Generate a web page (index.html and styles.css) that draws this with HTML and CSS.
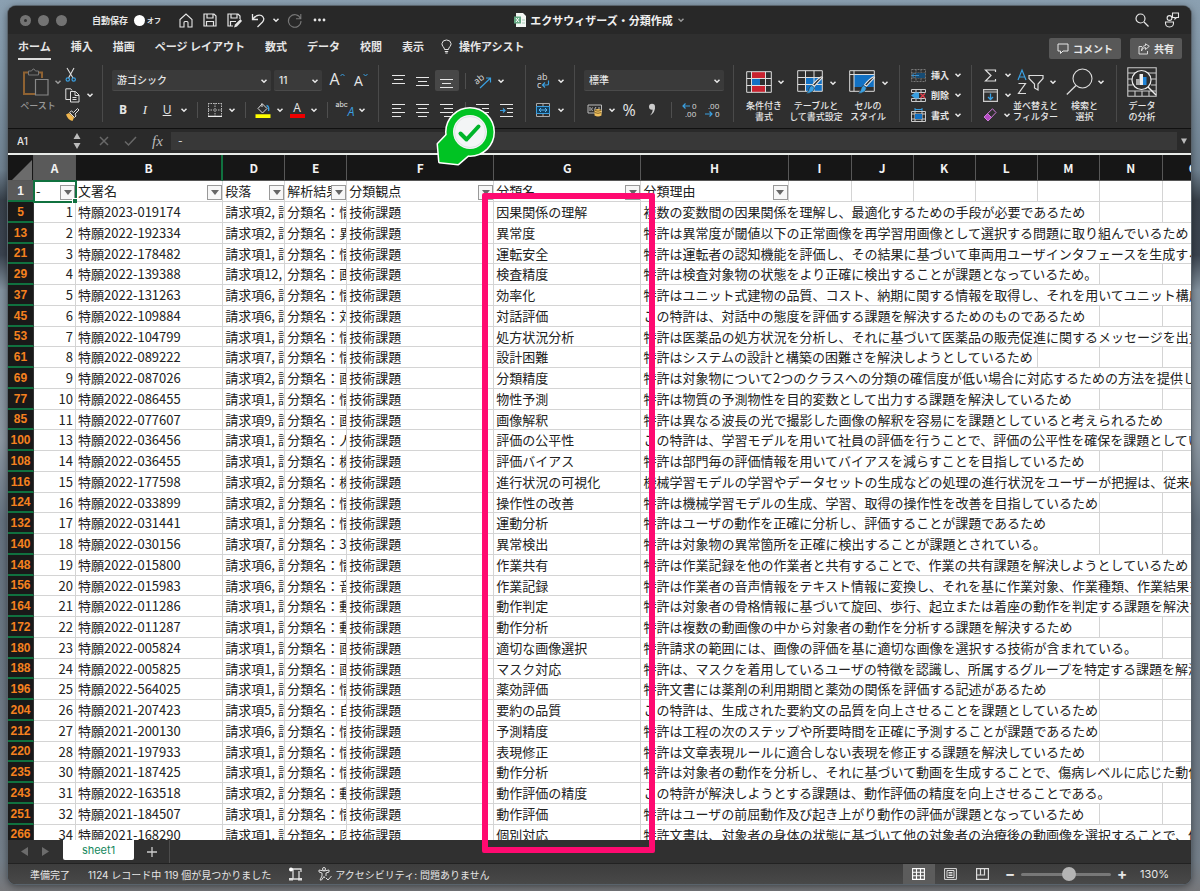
FILE: index.html
```html
<!DOCTYPE html>
<html lang="ja">
<head>
<meta charset="utf-8">
<title>エクサウィザーズ・分類作成</title>
<link rel="stylesheet" href="styles.css">
</head>
<body>
<svg class="defs" aria-hidden="true">
  <symbol id="chev" viewBox="0 0 8 8"><path d="M1.5 2.8 4 5.3 6.5 2.8" fill="none" stroke="currentColor" stroke-width="1.5"/></symbol>
  <symbol id="brush" viewBox="0 0 18 18"><path d="M16.500 1.500 9 9.500 7 8.500Q12 2.500 15.500.8Z" fill="#2f2f2f" stroke="#e8e8e8"/><path d="M6.500 9 9 11.300Q8 16.500 1 16.500 4 14 4 11.500 4.500 9.500 6.500 9Z" fill="#3a9fe0" stroke="#2f2f2f" stroke-width=".6"/></symbol>
</svg>
<div class="window">
  <header class="titlebar">
    <div class="title-left">
      <span class="lights"><i class="dot"></i><i></i><i></i></span>
      <label class="autosave">自動保存 <input type="checkbox" role="switch"><span class="switch">オフ</span></label>
      <button class="tb home" aria-label="ホーム画面"><svg width="14" height="15" viewBox="0 0 14 15"><path d="M1 6.500 7 1l6 5.500V14H9V9.500q0-1-1-1H6q-1 0-1 1V14H1Z" fill="none" stroke="currentColor" stroke-width="1.100"/></svg></button>
      <button class="tb" aria-label="保存"><svg width="14" height="14" viewBox="0 0 14 14"><path d="M1 1h10l2 2v10H1ZM4 1v4h6V1M3.500 13V8.500h7V13" fill="none" stroke="currentColor" stroke-width="1.200"/></svg></button>
      <button class="tb" aria-label="名前を付けて保存"><svg width="15" height="15" viewBox="0 0 15 15"><path d="M6 13H1V1h10l2 2v3M4 1v4h6V1M3.500 13V8.500H9" fill="none" stroke="currentColor" stroke-width="1.200"/><path d="M13.500 6 8 11.500 7 14.500 10 13.500 15 8" fill="currentColor"/></svg></button>
      <button class="tb" aria-label="元に戻す"><svg width="14" height="15" viewBox="0 0 14 15"><path d="M1.500 1v5.500H7M2 6Q6 .8 10.500 2.500 14.500 5.500 11.500 9L6.500 14" fill="none" stroke="currentColor" stroke-width="1.300"/></svg></button>
      <button class="tb narrow" aria-label="元に戻す履歴"><svg width="8" height="8"><use href="#chev"/></svg></button>
      <button class="tb dim" aria-label="やり直し"><svg width="15" height="15" viewBox="0 0 15 15"><path d="M13.500 5.500A6.300 6.300 0 1 0 14 8M13.800 1v4.800H9" fill="none" stroke="currentColor" stroke-width="1.100"/></svg></button>
      <button class="tb more" aria-label="その他"><svg width="13" height="4"><circle cx="2" cy="2" r="1.400" fill="currentColor"/><circle cx="6.500" cy="2" r="1.400" fill="currentColor"/><circle cx="11" cy="2" r="1.400" fill="currentColor"/></svg></button>
    </div>
    <h1 class="doc"><svg width="12" height="14" viewBox="0 0 12 14"><path d="M2 0h7l3 3v11H2Z" fill="#f2f6f3"/><path d="M0 3.500h7v7H0Z" fill="#63a882"/><path d="m2 5 3 4M5 5 2 9" stroke="#fff"/><path d="M8 7h3M8 10h3" stroke="#a8cdb8"/></svg>エクサウィザーズ・分類作成<svg class="soft" width="8" height="8"><use href="#chev"/></svg></h1>
    <div class="title-right">
      <button aria-label="検索"><svg width="14" height="14" viewBox="0 0 14 14"><circle cx="5.500" cy="5.500" r="4.500" fill="none" stroke="currentColor" stroke-width="1.200"/><path d="m9 9 4.500 4.500" stroke="currentColor" stroke-width="1.200"/></svg></button>
      <button aria-label="共同作業者"><svg width="16" height="16" viewBox="0 0 16 16"><g fill="none" stroke="currentColor" stroke-width="1.100"><path d="M8.500 1h6v4.500h-2L11 7V5.500H8.500ZM1.500 10h8q.5 5-4 5t-4-5Z"/><circle cx="5.500" cy="6" r="2.400"/></g></svg></button>
    </div>
  </header>

  <nav class="tabs">
    <div class="tab-list">
      <button class="active">ホーム</button><button>挿入</button><button>描画</button><button>ページ レイアウト</button><button>数式</button><button>データ</button><button>校閲</button><button>表示</button>
      <button class="assist"><svg width="11" height="15" viewBox="0 0 11 15"><path d="M3.500 10.500Q3.500 9 2 7.500.8 6 1 4.500 1.500 1 5.500 1T10 4.500Q10.200 6 9 7.500 7.500 9 7.500 10.500ZM3.800 12.500h3.400M4.300 14h2.400" fill="none" stroke="currentColor"/></svg>操作アシスト</button>
    </div>
    <div class="actions">
      <button><svg width="12" height="12" viewBox="0 0 12 12"><path d="M1 1h10v7H6L3.500 10.500V8H1Z" fill="none" stroke="currentColor"/></svg>コメント</button>
      <button><svg width="12" height="12" viewBox="0 0 12 12"><path d="M4 3.500H1V11h8.500V8M3.500 8Q4 4.500 7.500 4.500V6.500L11.300 3.300 7.500.8V2.500Q3.500 3 3.500 8Z" fill="none" stroke="currentColor" stroke-width=".9"/></svg>共有</button>
    </div>
  </nav>

  <div class="ribbon">
    <section class="group paste">
      <button class="big dimmed"><span class="pic"><svg width="26" height="28" viewBox="0 0 26 28"><path d="M5 4.500H1V26h12M16 4.500h3V10" fill="none" stroke="#8f6232" stroke-width="2"/><path d="M5.500 3h3l1.500-2h1l1.500 2h3v4h-10Z" fill="#2f2f2f" stroke="#777"/><path d="M12.500 11.500H25V27H12.500Z" fill="#2f2f2f" stroke="#888" stroke-width="1.200"/></svg><svg class="c" width="8" height="8"><use href="#chev"/></svg></span>ペースト</button>
      <div class="stack">
        <button aria-label="切り取り"><svg width="12" height="14" viewBox="0 0 12 14"><path d="M2 0 8 10M9 0 3.500 10" stroke="#ddd" stroke-width="1.100"/><g fill="none" stroke="#3a9fe0" stroke-width="1.200"><circle cx="2.800" cy="11.500" r="1.700"/><circle cx="8.700" cy="11.500" r="1.700"/></g></svg></button>
        <button aria-label="コピー"><svg width="15" height="15" viewBox="0 0 15 15"><path d="M5 11.500H.8V.8h5L7 2.500M5.500 3.500h5l3.500 3.500v7H5.500ZM10 3.500V7.500h4M7.500 9.500h4M7.500 11.500h4" fill="none" stroke="#ddd"/></svg><svg class="c" width="8" height="8"><use href="#chev"/></svg></button>
        <button aria-label="書式のコピー"><svg width="15" height="14" viewBox="0 0 15 14"><path d="M1 6.500 4 5l5 4.500L7.500 13Q3 12 1 6.500Z" fill="#f0b64e"/><path d="m4.500 4.500 2-1.500 2 1.500 4-4L14 2l-4 4 1 2-1.500 1.500Z" fill="#2f2f2f" stroke="#ddd"/></svg></button>
      </div>
    </section>

    <section class="group fonts">
      <div class="line">
        <span class="drop font"><select aria-label="フォント"><option>游ゴシック</option></select><svg width="8" height="8"><use href="#chev"/></svg></span>
        <span class="drop size"><select aria-label="フォント サイズ"><option>11</option></select><svg width="8" height="8"><use href="#chev"/></svg></span>
        <button class="w24 grow" aria-label="フォントの拡大"><span class="latin">A</span><svg width="5" height="4"><path d="M.5 3 2.500 1l2 2" fill="none" stroke="#3a9fe0"/></svg></button>
        <button class="w24 shrink" aria-label="フォントの縮小"><span class="latin">A</span><svg width="5" height="4"><path d="M.5 1l2 2 2-2" fill="none" stroke="#3a9fe0"/></svg></button>
      </div>
      <div class="line">
        <button class="w22 b">B</button><button class="w22 i">I</button><button class="w22 u">U</button><button class="w12" aria-label="下線の種類"><svg width="8" height="8"><use href="#chev"/></svg></button><i class="bar"></i>
        <button class="w22" aria-label="罫線"><svg width="14" height="14" viewBox="0 0 14 14"><path d="M.5 0v13M7 0v13M13.500 0v13M0 .5h14M0 7h14" stroke="#bbb" stroke-dasharray="1.500 1"/><path d="M0 13.300h14" stroke="#eee" stroke-width="1.300"/></svg></button><button class="w12" aria-label="罫線の種類"><svg width="8" height="8"><use href="#chev"/></svg></button><i class="bar"></i>
        <button class="w22" aria-label="塗りつぶし"><svg width="16" height="16" viewBox="0 0 16 16"><path d="M7 2 3 6.500 7.500 11 12 6.500 7 1.500V5" fill="none" stroke="#ddd"/><path d="M11.500 3.500Q14.500 4.500 13.500 9" fill="none" stroke="#3a9fe0" stroke-width="1.400"/><path d="M.5 12.300h15V16H.5Z" fill="#ffff00"/></svg></button><button class="w12" aria-label="塗りつぶしの色"><svg width="8" height="8"><use href="#chev"/></svg></button>
        <button class="w22 fcolor" aria-label="フォントの色"><span class="latin">A</span></button><button class="w12" aria-label="フォントの色の種類"><svg width="8" height="8"><use href="#chev"/></svg></button><i class="bar"></i>
        <button class="w22 phon" aria-label="文字装飾"><span>abc</span><em>A</em></button><button class="w12" aria-label="文字装飾の種類"><svg width="8" height="8"><use href="#chev"/></svg></button>
      </div>
    </section>

    <section class="group align">
      <div class="line">
        <button class="w24" aria-label="上揃え"><svg width="14" height="14"><path d="M0 1.500h13M2 5.500h9M0 9.500h13" stroke="currentColor"/></svg></button><button class="w24" aria-label="上下中央揃え"><svg width="14" height="14"><path d="M0 3.500h13M2 7.500h9M0 11.500h13" stroke="currentColor"/></svg></button><button class="w24 on" aria-label="下揃え"><svg width="14" height="14"><path d="M0 5.500h13M2 9.500h9M0 13.500h13" stroke="currentColor"/></svg></button><i class="bar thin"></i>
        <button class="w24" aria-label="方向"><svg width="17" height="16" viewBox="0 0 17 16"><text x="0" y="9" class="orient" transform="rotate(-40 5 8)">ab</text><path d="M5 15 15 5.500M11 5h4.500v4.500" fill="none" stroke="#3a9fe0" stroke-width="1.200"/></svg></button><button class="w12" aria-label="方向の種類"><svg width="8" height="8"><use href="#chev"/></svg></button>
      </div>
      <div class="line">
        <button class="w24" aria-label="左揃え"><svg width="14" height="14"><path d="M0 1.500h13M0 5.500h9M0 9.500h13M0 13.500h9" stroke="currentColor"/></svg></button><button class="w24" aria-label="中央揃え"><svg width="14" height="14"><path d="M0 1.500h13M2 5.500h9M0 9.500h13M2 13.500h9" stroke="currentColor"/></svg></button><button class="w24" aria-label="右揃え"><svg width="14" height="14"><path d="M0 1.500h13M4 5.500h9M0 9.500h13M4 13.500h9" stroke="currentColor"/></svg></button><i class="bar thin"></i>
        <button class="w24" aria-label="インデントを減らす"><svg width="14" height="14"><path d="M0 1.500h13M6 5.500h7M6 9.500h7M0 13.500h13" stroke="currentColor"/><path d="M5 7.500H1M3 5.500l-2 2 2 2" fill="none" stroke="#3a9fe0"/></svg></button><button class="w24" aria-label="インデントを増やす"><svg width="14" height="14"><path d="M0 1.500h13M7 5.500h6M7 9.500h6M0 13.500h13" stroke="currentColor"/><path d="M0 7.500h5M3 5.500l2 2-2 2" fill="none" stroke="#3a9fe0" stroke-width="1.200"/></svg></button>
      </div>
    </section>

    <section class="group wrap">
      <div class="line"><button class="w24" aria-label="折り返し"><svg width="14" height="16" viewBox="0 0 14 16"><text x="1" y="7" class="wraptxt">ab</text><text x="1" y="15" class="wraptxt">c</text><path d="M12.500 7.500V11Q12.500 12 11 12H7M9 9.500 6.500 12 9 14.500" fill="none" stroke="#3a9fe0" stroke-width="1.200"/></svg></button><button class="w12" aria-label="折り返しの種類"><svg width="8" height="8"><use href="#chev"/></svg></button></div>
      <div class="line"><button class="w24" aria-label="セルの結合"><svg width="14" height="14" viewBox="0 0 14 14"><path d="M.5.5h13v13H.5ZM7 .5v3M7 10.500v3" fill="none" stroke="#aaa"/><path d="M.5 3.500h13v7H.5Z" fill="#123f5e" stroke="#3a9fe0"/><path d="M3 7h8M5 5 3 7l2 2M9 5l2 2-2 2" fill="none" stroke="#5cb7f2"/></svg></button><button class="w12" aria-label="結合の種類"><svg width="8" height="8"><use href="#chev"/></svg></button></div>
    </section>

    <section class="group number">
      <div class="line"><span class="drop fmt"><select aria-label="表示形式"><option>標準</option></select><svg width="8" height="8"><use href="#chev"/></svg></span></div>
      <div class="line">
        <button class="w22" aria-label="通貨"><svg width="16" height="14" viewBox="0 0 16 14"><path d="M1 2h13.500v8H1ZM3 4v4M5.500 4.500Q3.500 6 5.500 8M9 4Q7 6 8 8M12 4v2" fill="none" stroke="#bbb"/><path d="M7.500 7Q11 5 14.500 7v5.500Q11 14.500 7.500 12.500Z" fill="#f0c05e"/><path d="M7.500 7.300Q11 9 14.500 7.300M7.500 9.500Q11 11.200 14.500 9.500" fill="none" stroke="#554015" stroke-width=".7"/></svg></button><button class="w12" aria-label="通貨の種類"><svg width="8" height="8"><use href="#chev"/></svg></button>
        <button class="w22 pct">%</button><button class="w24" aria-label="桁区切り"><svg width="8" height="13" viewBox="0 0 8 13"><circle cx="4" cy="3.800" r="3" fill="#ccc"/><path d="M7 3.500Q7.500 9.500 2 12.500 5 9 4.500 6.500Z" fill="#ccc"/></svg></button><i class="bar"></i>
        <button class="w24" aria-label="小数点以下を増やす"><svg width="16" height="16" viewBox="0 0 16 16"><text x="10" y="7" class="dec">0</text><text x="3" y="15" class="dec">.00</text><path d="M8 4H1M3.500 1.500 1 4l2.500 2.500" fill="none" stroke="#3a9fe0" stroke-width="1.200"/></svg></button><button class="w22" aria-label="小数点以下を減らす"><svg width="16" height="16" viewBox="0 0 16 16"><text x="3" y="7" class="dec">.00</text><text x="10" y="15" class="dec">0</text><path d="M0 12h7M4.500 9.500 7 12l-2.500 2.500" fill="none" stroke="#3a9fe0" stroke-width="1.200"/></svg></button>
      </div>
    </section>

    <section class="group styles">
      <button class="big"><span class="pic"><svg width="26" height="22" viewBox="0 0 26 22"><path d="M6 1h13v6H6ZM6 15h13v6H6Z" fill="#c9222f"/><path d="M6 8h8v6H6Z" fill="#1271c4"/><path d="M.7.7h24.600v20.600H.7ZM.7 7.500h24.600M.7 14.500h24.600M5.500.7v20.600M19.500.7v20.600" fill="none" stroke="#ddd"/></svg><svg class="c" width="8" height="8"><use href="#chev"/></svg></span>条件付き<br>書式</button>
      <button class="big"><span class="pic"><svg width="27" height="25" viewBox="0 0 27 25"><path d="M9 7.500h16V21H9Z" fill="#1271c4"/><path d="M.7.700h24.600v20.600H.7ZM.7 7.500h24.600M.7 14.500h24.600M8.500.7v20.600M17 .7v20.600" fill="none" stroke="#ddd"/><use href="#brush" x="8" y="6" width="19" height="19"/></svg><svg class="c" width="8" height="8"><use href="#chev"/></svg></span>テーブルと<br>して書式設定</button>
      <button class="big"><span class="pic"><svg width="27" height="25" viewBox="0 0 27 25"><path d="M5 5h20v12H5Z" fill="#1271c4"/><path d="M.7.7h24.600v20.600H.7ZM.7 4.500h24.600M5 .7v20.600" fill="none" stroke="#ddd"/><use href="#brush" x="8" y="6" width="19" height="19"/></svg><svg class="c" width="8" height="8"><use href="#chev"/></svg></span>セルの<br>スタイル</button>
    </section>

    <section class="group cells">
      <button><svg width="15" height="13" viewBox="0 0 15 13"><path d="M.5.5h14v12H.5ZM.5 4h14M.5 9h14M5 .5v12M10 .5v12" fill="none" stroke="#777" stroke-dasharray="2 1"/><path d="M5 4h9v5H5Z" fill="#174c75"/><path d="M8 6.500H1M3.500 4 1 6.500 3.500 9" fill="none" stroke="#3a8fcc"/></svg>挿入<svg class="c" width="8" height="8"><use href="#chev"/></svg></button>
      <button><svg width="15" height="13" viewBox="0 0 15 13"><path d="M.5.500h14v3M.5 12.500h14v-3M.5.5v3h14M.5 12.500v-3h14M5 .5v3M10 .5v3M5 9.500v3M10 9.500v3" fill="none" stroke="#ccc"/><path d="M0 6.500 4 3.500h4v6H4Z" fill="#3a9fe0"/><path d="m9.500 4.500 4.500 4.500M14 4.500 9.500 9" stroke="#e8404c" stroke-width="1.300"/></svg>削除<svg class="c" width="8" height="8"><use href="#chev"/></svg></button>
      <button><svg width="15" height="14" viewBox="0 0 15 14"><path d="M.5 3.500h14v10H.5ZM.5 6h14M.5 11h14M4 3.500v10M11 3.500v10" fill="none" stroke="#ccc"/><path d="M4 6h7v5H4Z" fill="#1271c4"/><path d="M4 0v3M11 0v3M4 1.500h7" stroke="#3a9fe0"/></svg>書式<svg class="c" width="8" height="8"><use href="#chev"/></svg></button>
    </section>

    <section class="group edit">
      <div class="stack">
        <button aria-label="合計"><svg width="15" height="13" viewBox="0 0 15 13"><path d="M12.500 3V1H2.500L8 6.500 2.500 12h10V10" fill="none" stroke="#ddd" stroke-width="1.200"/></svg><svg class="c" width="8" height="8"><use href="#chev"/></svg></button>
        <button aria-label="フィル"><svg width="15" height="13" viewBox="0 0 15 13"><path d="M.6.6h13.800v11.800H.6ZM.6 3h13.800" fill="none" stroke="#ccc" stroke-width="1.200"/><path d="M7.500 4.500v6M5 8l2.500 2.500L10 8" fill="none" stroke="#3a9fe0" stroke-width="1.300"/></svg><svg class="c" width="8" height="8"><use href="#chev"/></svg></button>
        <button aria-label="クリア"><svg width="14" height="14" viewBox="0 0 14 14"><path d="M1 9 4.500 5.500 8.500 9.500 5 13Z" fill="#b54bc4"/><path d="M1 9 9.500.8 13 4.500 5 13ZM4.500 5.500l4 4" fill="none" stroke="#d07cdb"/></svg><svg class="c" width="8" height="8"><use href="#chev"/></svg></button>
      </div>
      <button class="big"><span class="pic"><svg width="28" height="26" viewBox="0 0 28 26"><path d="M1 11 5 1l4 10M2.300 8h5.400" fill="none" stroke="#3a9fe0" stroke-width="1.200"/><path d="M1.500 14.500h7L1.500 24.500h7.500" fill="none" stroke="#ddd" stroke-width="1.200"/><path d="M12 6.500h14v3L21 15v6l-3.500-2v-4L12 9.500Z" fill="none" stroke="#ddd" stroke-width="1.200"/></svg><svg class="c" width="8" height="8"><use href="#chev"/></svg></span>並べ替えと<br>フィルター</button>
      <button class="big"><span class="pic"><svg width="27" height="28" viewBox="0 0 27 28"><circle cx="16.500" cy="10.500" r="9.500" fill="none" stroke="#ddd" stroke-width="1.100"/><path d="M10 17.500.8 26.500" stroke="#ddd" stroke-width="1.300"/></svg><svg class="c" width="8" height="8"><use href="#chev"/></svg></span>検索と<br>選択</button>
    </section>

    <section class="group analyze">
      <button class="big"><span class="pic"><svg width="30" height="30" viewBox="0 0 30 30"><path d="M.8.8h28.400v28.400H.8ZM.8 6h28.400M.8 12h5M.8 18h5M.8 24h28.400M24 12h5M24 18h5M8 24v5M15 24v5M22 24v5" fill="none" stroke="#ccc" stroke-width="1.100"/><circle cx="14.500" cy="13" r="9.500" fill="#2f2f2f" stroke="#eee" stroke-width="1.200"/><path d="m21 20 8 8" stroke="#eee" stroke-width="1.400"/><path d="M9 12h3.500v6H9Z" fill="#aaa"/><path d="M12.500 7H16v11h-3.500Z" fill="#eee"/><path d="M16 10h3.500v8H16Z" fill="#1f84d8"/></svg></span>データ<br>の分析</button>
    </section>
  </div>

  <div class="formula">
    <input class="name" aria-label="名前ボックス" value="A1">
    <span class="spin"><svg width="8" height="18" viewBox="0 0 8 18"><path d="M4 1 7.500 7h-7ZM4 17 .5 11h7Z" fill="#bbb"/></svg></span>
    <button aria-label="キャンセル"><svg width="10" height="10"><path d="m1 1 8 8M9 1 1 9" stroke="#686868" stroke-width="1.500"/></svg></button>
    <button aria-label="入力"><svg width="13" height="10"><path d="m1 5.500 3.500 3.500L12 1" fill="none" stroke="#686868" stroke-width="1.500"/></svg></button>
    <button class="fx">fx</button>
    <input class="expr" aria-label="数式バー" value="-">
    <button class="expand" aria-label="展開"><svg width="8" height="8"><path d="M1 1.500h6L4 7Z" fill="#bbb"/></svg></button>
  </div>

  <main class="sheet">
    <table>
      <colgroup><col class="c-num"><col class="c-a"><col class="c-wide"><col class="c-std"><col class="c-std"><col class="c-wide"><col class="c-wide"><col class="c-wide"><col class="c-max"><col class="c-std"><col class="c-std"><col class="c-std"><col class="c-std"><col class="c-max"><col class="c-std"></colgroup>
      <thead>
        <tr class="letters"><th class="corner"><svg width="20" height="20"><path d="M20 0v20H0Z" fill="#6b6b6b"/></svg></th><th class="sel">A</th><th class="hid">B</th><th>D</th><th>E</th><th>F</th><th>G</th><th>H</th><th>I</th><th>J</th><th>K</th><th>L</th><th>M</th><th>N</th><th>O</th></tr>
      </thead>
      <tbody id="rows">
        <tr class="fields"><th>1</th><td class="cursor">-<button aria-label="絞り込み"></button><i></i></td><td>文署名<button aria-label="絞り込み"></button></td><td>段落<button aria-label="絞り込み"></button></td><td>解析結果<button aria-label="絞り込み"></button></td><td>分類観点<button aria-label="絞り込み"></button></td><td>分類名<button aria-label="絞り込み"></button></td><td>分類理由<button aria-label="絞り込み"></button></td><td></td><td></td><td></td><td></td><td></td><td></td><td></td></tr>
      </tbody>
    </table>
  </main>

  <div class="sheetbar">
    <button aria-label="前のシート"><svg width="8" height="9"><path d="M7 0v9L0 4.500Z" fill="#6c6c6c"/></svg></button>
    <button aria-label="次のシート"><svg width="8" height="9"><path d="M1 0v9L8 4.500Z" fill="#6c6c6c"/></svg></button>
    <button class="sheet-tab">sheet1</button>
    <button class="add" aria-label="シートの追加"><svg width="10" height="10"><path d="M5 0v10M0 5h10" stroke="#ccc" stroke-width="1.300"/></svg></button>
  </div>

  <footer class="status">
    <span>準備完了</span>
    <span class="count">1124 レコード中 119 個が見つかりました</span>
    <svg class="macro" width="14" height="14" viewBox="0 0 14 14"><path d="M2 2h10v3M4 2v10M10 4v9M4 12h6.500" fill="none" stroke="#ddd" stroke-width="1.300"/><circle cx="2" cy="2.500" r="2" fill="#fff"/><path d="M0 11h4v2.500H0ZM9 11h4v2.500H9Z" fill="#ddd"/></svg>
    <button class="a11y"><svg width="14" height="14" viewBox="0 0 14 14"><circle cx="6" cy="2" r="1.500" fill="none" stroke="#ddd"/><path d="M6 4 1 3v2l3 1v3l-2 4h1.500L6 9.500l1 1.500M6 4l5-1v2L8 6v3M8 11l2 2 3.500-4" fill="none" stroke="#ddd"/></svg>アクセシビリティ: 問題ありません</button>
    <div class="views">
      <button class="on" aria-label="標準表示"><svg width="13" height="12" viewBox="0 0 13 12"><path d="M.6.6h11.800v10.800H.6ZM.6 4.200h11.800M.6 7.800h11.800M4.500.6v10.800M8.500.6v10.800" fill="none" stroke="#fff" stroke-width="1.100"/></svg></button>
      <button aria-label="ページ レイアウト"><svg width="13" height="12" viewBox="0 0 13 12"><path d="M.6.6h11.800v10.800H.6ZM3 2.500h7v7H3ZM4.500 4.500h4M4.500 6h4M4.500 7.500h4" fill="none" stroke="#ddd"/></svg></button>
      <button aria-label="改ページ プレビュー"><svg width="13" height="12" viewBox="0 0 13 12"><path d="M.6.6h11.800v10.800H.6ZM.6 7h7.900V.6M4.500.6V7" fill="none" stroke="#ddd" stroke-width="1.200"/></svg></button>
    </div>
    <button class="step">−</button><input type="range" aria-label="ズーム" min="0" max="100" value="54"><button class="step">+</button>
    <output>130%</output>
  </footer>

  <div class="highlight"></div>
  <svg class="marker" width="62" height="62" viewBox="0 0 62 62">
    <g fill="#fff" stroke="#fff" stroke-width="3" stroke-linejoin="round"><circle cx="34" cy="28" r="23.500"/><path d="M14 27.500 2 40 3.500 58 22 60 33 50.500Z"/></g>
    <g fill="#00c323"><circle cx="34" cy="28" r="23.500"/><path d="M14 27.500 2 40 3.500 58 22 60 33 50.500Z"/></g>
    <circle cx="34" cy="28" r="17" fill="#f3f5f6"/><circle cx="34" cy="28" r="15.500" fill="none" stroke="#dfe3e5"/>
    <path d="m24.500 29.500 6 6L42.500 22.500" fill="none" stroke="#00b52a" stroke-width="4" stroke-linecap="round" stroke-linejoin="round"/>
  </svg>
</div>
<script src="rows.js"></script>
</body>
</html>
```

FILE: rows.js
```js
// row | no. | application | claim | topic | class | reason
const data = `5|1|2023-019174|2, 請|情|因果関係の理解|複数の変数間の因果関係を理解し、最適化するための手段が必要であるため
13|2|2022-192334|2, 請|異|異常度|特許は異常度が閾値以下の正常画像を再学習用画像として選択する問題に取り組んでいるため
21|3|2022-178482|1, 請|情|運転安全|特許は運転者の認知機能を評価し、その結果に基づいて車両用ユーザインタフェースを生成すること
29|4|2022-139388|12,|画|検査精度|特許は検査対象物の状態をより正確に検出することが課題となっているため。
37|5|2022-131263|6, 請|情|効率化|特許はユニット式建物の品質、コスト、納期に関する情報を取得し、それを用いてユニット構成を
45|6|2022-109884|6, 請|対|対話評価|この特許は、対話中の態度を評価する課題を解決するためのものであるため
53|7|2022-104799|1, 請|情|処方状況分析|特許は医薬品の処方状況を分析し、それに基づいて医薬品の販売促進に関するメッセージを出力する
61|8|2022-089222|7, 請|情|設計困難|特許はシステムの設計と構築の困難さを解決しようとしているため
69|9|2022-087026|2, 請|画|分類精度|特許は対象物について2つのクラスへの分類の確信度が低い場合に対応するための方法を提供している
77|10|2022-086455|1, 請|情|物性予測|特許は物質の予測物性を目的変数として出力する課題を解決しているため
85|11|2022-077607|9, 請|画|画像解釈|特許は異なる波長の光で撮影した画像の解釈を容易にを課題としていると考えられるため
100|13|2022-036456|1, 請|人|評価の公平性|この特許は、学習モデルを用いて社員の評価を行うことで、評価の公平性を確保を課題としている
108|14|2022-036455|1, 請|機|評価バイアス|特許は部門毎の評価情報を用いてバイアスを減らすことを目指しているため
116|15|2022-177598|2, 請|機|進行状況の可視化|機械学習モデルの学習やデータセットの生成などの処理の進行状況をユーザーが把握は、従来の方
124|16|2022-033899|2, 請|情|操作性の改善|特許は機械学習モデルの生成、学習、取得の操作性を改善を目指しているため
132|17|2022-031441|1, 請|情|運動分析|特許はユーザの動作を正確に分析し、評価することが課題であるため
140|18|2022-030156|7, 請|3D|異常検出|特許は対象物の異常箇所を正確に検出することが課題とされている。
148|19|2022-015800|6, 請|情|作業共有|特許は作業記録を他の作業者と共有することで、作業の共有課題を解決しようとしているため
156|20|2022-015983|6, 請|音|作業記録|特許は作業者の音声情報をテキスト情報に変換し、それを基に作業対象、作業種類、作業結果を特
164|21|2022-011286|1, 請|動|動作判定|特許は対象者の骨格情報に基づいて旋回、歩行、起立または着座の動作を判定する課題を解決する
172|22|2022-011287|1, 請|動|動作分析|特許は複数の動画像の中から対象者の動作を分析する課題を解決するため
180|23|2022-005824|1, 請|画|適切な画像選択|特許請求の範囲には、画像の評価を基に適切な画像を選択する技術が含まれている。
188|24|2022-005825|1, 請|画|マスク対応|特許は、マスクを着用しているユーザの特徴を認識し、所属するグループを特定する課題を解決し
196|25|2022-564025|1, 請|情|薬効評価|特許文書には薬剤の利用期間と薬効の関係を評価する記述があるため
204|26|2021-207423|5, 請|自|要約の品質|この特許は、生成された要約文の品質を向上させることを課題としているため
212|27|2021-200130|6, 請|情|予測精度|特許は工程の次のステップや所要時間を正確に予測することが課題であるため
220|28|2021-197933|1, 請|情|表現修正|特許は文章表現ルールに適合しない表現を修正する課題を解決しているため
235|30|2021-187425|1, 請|情|動作分析|特許は対象者の動作を分析し、それに基づいて動画を生成することで、傷病レベルに応じた動作の
243|31|2022-163518|2, 請|動|動作評価の精度|この特許が解決しようとする課題は、動作評価の精度を向上させることである。
251|32|2021-184507|1, 請|情|動作評価|特許はユーザの前屈動作及び起き上がり動作の評価が課題となっているため
266|34|2021-168290|1, 請|医|個別対応|特許文書は、対象者の身体の状態に基づいて他の対象者の治療後の動画像を選択することで、個々`;

// Right edges of columns H to O, measured from the left of H.
const edges = [147, 210, 272, 334, 396, 458, 521, 583];
const charWidth = 13;
const body = document.getElementById("rows");

for (const line of data.split("\n")) {
  const [row, no, app, claim, topic, cls, reason] = line.split("|");
  const tr = body.insertRow();
  const head = document.createElement("th");
  head.textContent = row;
  tr.append(head);
  const cells = [no, "特願" + app, "請求項" + claim, "分類名：" + topic, "技術課題", cls, reason];
  for (const text of cells) tr.insertCell().textContent = text;

  // Long text runs over the empty cells to its right.
  const width = reason.length * charWidth + 2;
  const found = edges.findIndex((edge) => edge >= width);
  const span = found < 0 ? edges.length : found + 1;
  tr.lastElementChild.colSpan = span;
  for (let i = span; i < edges.length; i++) tr.insertCell();
}
```

FILE: styles.css
```css
* { box-sizing: border-box; }
html, body { height: 100%; }
body {
  margin: 0;
  padding: 6px 9px 7px 8px;
  overflow: hidden;
  background: linear-gradient(180deg, #8ba0b1 0, #8499aa 60px, #6f8190 170px, #39424c 200px, #3b4450 255px, #8493a0 290px, #8d98a3 440px, #65727f 520px, #747f8a 860px, #77787b 100%);
  color: #e6e6e6;
  font-size: 10px;
}
button, input, select, output { font: inherit; color: inherit; }
button {
  display: flex;
  align-items: center;
  justify-content: center;
  flex: none;
  padding: 0;
  border: 0;
  background: none;
  white-space: nowrap;
}
svg { flex: none; display: block; overflow: visible; }
.defs { position: absolute; width: 0; height: 0; }

.window {
  position: relative;
  display: flex;
  flex-direction: column;
  height: 100%;
  overflow: hidden;
  border-radius: 8px;
  background: #2f2f2f;
  box-shadow: 0 0 0 1px #59636c, 0 2px 8px #0008;
  font-family: Inter, "Noto Sans CJK JP", sans-serif;
}

/* Title bar */
.titlebar {
  display: grid;
  grid-template-columns: 1fr auto 1fr;
  align-items: center;
  height: 28px;
  flex: none;
  background: #282828;
}
.title-left { display: flex; align-items: center; padding-left: 12px; }
.lights { display: flex; gap: 7px; margin-right: 25px; }
.lights i { width: 11px; height: 11px; border-radius: 50%; background: #737373; }
.lights .dot { border: 4px solid #737373; background: #303030; }
.autosave { display: flex; align-items: center; gap: 6px; font-size: 9px; font-weight: 700; white-space: nowrap; }
.autosave input {
  appearance: none;
  width: 11px;
  height: 11px;
  margin: 0;
  border-radius: 50%;
  background: #fff;
}
.switch { margin: 0 7px 0 -4px; font-size: 7px; }
.tb { width: 24px; height: 20px; }
.tb.home { margin-left: 6px; }
.tb.narrow { width: 12px; }
.tb.dim { color: #777; }
.tb.more { margin-left: 1px; }
.doc { display: flex; align-items: center; gap: 4px; margin: 0; font-size: 11px; font-weight: 700; color: #f0f0f0; }
.soft { color: #999; }
.title-right { display: flex; justify-content: flex-end; gap: 15px; padding-right: 11px; }

/* Ribbon tabs */
.tabs { display: flex; justify-content: space-between; height: 28px; flex: none; padding: 0 9px 0 10px; }
.tab-list { display: flex; gap: 20px; }
.tab-list button { height: 26px; font-size: 11px; font-weight: 700; border-bottom: 2px solid transparent; }
.tab-list .active { border-color: #ddd; }
.tab-list .assist { gap: 7px; margin-left: -3px; }
.actions { display: flex; gap: 9px; padding-top: 4px; }
.actions button { gap: 4px; height: 21px; padding: 0 8px; border-radius: 2px; background: #585858; font-weight: 700; }

/* Ribbon */
.ribbon { display: flex; height: 66px; flex: none; padding: 0 0 0 10px; }
.group { display: flex; position: relative; flex: none; height: 57px; margin-top: 3px; border-right: 1px solid #4a4a4a; }
.group:last-child { border: 0; }
.line { display: flex; align-items: center; flex: none; height: 29px; }
.fonts, .align, .wrap, .number { flex-direction: column; padding-top: 1px; }
.paste { width: 85px; }
.fonts { width: 276px; padding-left: 9px; }
.align { width: 147px; padding-left: 8px; }
.wrap { width: 49px; padding-left: 5px; }
.number { width: 159px; padding-left: 9px; }
.styles { width: 166px; padding-left: 4px; }
.cells { width: 72px; padding-left: 11px; }
.edit { width: 145px; padding-left: 11px; }
.analyze { padding-left: 3px; }
.w12 { width: 12px; }
.w22 { width: 22px; }
.w24 { width: 24px; height: 21px; }
.on { background: #474747; border-radius: 2px; }
.bar { width: 14px; height: 16px; background: linear-gradient(#4f4f4f, #4f4f4f) center / 1px 100% no-repeat; }
.bar.thin { width: 12px; }
.big { flex-direction: column; justify-content: flex-start; width: 52px; font-size: 9px; line-height: 11px; font-weight: 500; }
.pic { display: flex; align-items: center; justify-content: center; gap: 5px; height: 34px; }
.big .pic { margin: 0 0 1px 9px; }
.styles .big .pic { height: 35px; margin-left: 2px; margin-bottom: 0; }
.styles .big:first-child .pic { padding-bottom: 2px; }
.paste .big { width: 40px; color: #999; }
.analyze .big { width: 44px; }
.analyze .big .pic { margin-left: 0; }
.stack { display: flex; flex-direction: column; }
.stack button { height: 20px; gap: 6px; justify-content: flex-start; }
.paste .stack { margin-left: 7px; }
.edit .stack button { width: 28px; justify-content: space-between; }
.edit .big { width: 49px; }
.edit .big .pic { gap: 4px; margin-left: 2px; }
.cells { flex-direction: column; }
.cells button { height: 20px; justify-content: flex-start; gap: 5px; font-size: 9px; font-weight: 700; }

.drop { position: relative; display: block; height: 21px; margin-right: 3px; }
.drop select { appearance: none; width: 100%; height: 21px; padding: 0 5px; border: 0; border-bottom: 1px solid #4a4a4a; border-radius: 2px; background: #3a3a3a; font-weight: 500; }
.drop svg { position: absolute; right: 3px; top: 7px; pointer-events: none; }
.font { width: 159px; }
.size { width: 48px; }
.fmt { width: 140px; }
.latin, .b, .i, .u { font-family: "Open Sans", sans-serif; }
.grow, .shrink { align-items: flex-start; }
.grow .latin { font-size: 16px; line-height: 19px; }
.shrink .latin { font-size: 14px; line-height: 21px; }
.grow svg, .shrink svg { margin-top: 3px; }
.b { font-size: 12px; font-weight: 700; }
.i { font-family: "Liberation Serif", serif; font-size: 13px; font-style: italic; }
.u { font-size: 12px; text-decoration: underline; }
.fcolor .latin { width: 15px; font-size: 12px; line-height: 12px; border-bottom: 4px solid #f00000; }
.phon { align-items: flex-start; font-size: 7px; line-height: 8px; }
.phon em { margin-top: 5px; color: #3a9fe0; font-family: "Open Sans", sans-serif; font-size: 12px; line-height: 12px; }
.pct { font-family: "Open Sans", sans-serif; font-size: 16px; }
.orient { fill: #ddd; font: 9px "Open Sans", sans-serif; }
.wraptxt { fill: #ddd; font: 9px "Open Sans", sans-serif; }
.dec { fill: #ddd; font: 8px "Open Sans", sans-serif; }

/* Formula bar */
.formula {
  display: flex;
  align-items: center;
  height: 27px;
  flex: none;
  border-top: 1px solid #111;
  border-bottom: 2px solid #e8ebe8;
  background: #2a2a2a;
}
.formula .name { width: 62px; padding: 0 0 0 9px; border: 0; background: none; font-weight: 500; }
.spin { width: 17px; padding-left: 3px; }
.formula button { width: 27px; height: 20px; }
.formula > button:nth-of-type(1) { margin-left: 3px; }
.formula .fx { font: italic 15px "Liberation Serif", serif; color: #bbb; }
.expr { flex: 1; min-width: 0; height: 18px; padding: 0 7px; border: 0; background: #383838; }
.formula .expand { width: 14px; }

/* Sheet */
.sheet { flex: 1; min-height: 0; overflow: hidden; background: #fff; color: #222; font-family: "Noto Sans CJK JP", sans-serif; }
table { width: 1217px; table-layout: fixed; border-collapse: separate; border-spacing: 0; font-size: 13px; line-height: 18px; }
.c-num { width: 26px; }
.c-a { width: 42px; }
.c-wide { width: 147px; }
.c-std { width: 62px; }
.c-max { width: 63px; }
th, td { height: 21px; padding: 0; white-space: nowrap; overflow: hidden; }
tr:nth-child(4n) th, tr:nth-child(4n) td { height: 20px; }
td { padding: 0 2px; border-right: 1px solid #d4d4d4; border-bottom: 1px solid #d4d4d4; }
td:nth-child(2) { text-align: right; }
tbody th { border-bottom: 2px solid #10713f; border-right: 1px solid #333; background: #191919; color: #f5811f; font: 700 12px/16px "Liberation Sans", sans-serif; }
.letters th { height: 26px; border-right: 1px solid #575757; border-bottom: 1px solid #575757; background: #161616; color: #f2f2f2; font: 700 12px/16px "Noto Sans CJK JP", sans-serif; }
.letters .sel { background: #5a5a5a; }
.letters .hid { border-right: 2px solid #10713f; }
.letters .corner svg { margin: 4px 0 0 4px; }
.fields th { background: #5a5a5a; color: #f2f2f2; }
.fields td { position: relative; }
.fields td button {
  position: absolute;
  right: 0;
  top: 4px;
  width: 15px;
  height: 15px;
  border: 1px solid #999;
  background: #f7f7f7;
}
.fields td button::after { content: ""; border: 4px solid transparent; border-top: 5px solid #666; border-bottom: 0; }
.fields .cursor { text-align: left; overflow: visible; outline: 2px solid #10713f; outline-offset: -1px; z-index: 1; }
.cursor i { position: absolute; right: -2px; bottom: -2px; width: 5px; height: 5px; background: #10713f; border: 1px solid #fff; border-width: 1px 0 0 1px; }

/* Sheet tabs */
.sheetbar { display: flex; height: 24px; flex: none; padding-left: 7px; background: #303030; border-bottom: 1px solid #222; }
.sheetbar button { width: 20px; }
.sheetbar .sheet-tab { width: 71px; height: 20px; margin-left: 8px; border-radius: 0 0 2px 2px; background: #fff; color: #13875c; font-size: 11px; }
.sheetbar .add { width: 36px; border-right: 1px solid #4c4c4c; }

/* Status bar */
.status { display: flex; align-items: center; height: 20px; flex: none; padding: 0 22px; background: linear-gradient(#3d3d3d, #484848); white-space: nowrap; }
.count { margin-left: 18px; }
.macro { margin-left: 18px; }
.a11y { gap: 3px; margin-left: 15px; }
.views { display: flex; margin-left: auto; }
.views button { width: 32px; height: 20px; }
.views .on { background: #5c5c5c; border-radius: 0; }
.step { width: 22px; font-size: 15px; font-weight: 700; line-height: 16px; }
.status input { appearance: none; width: 90px; height: 3px; margin: 0; border-radius: 2px; background: #787878; }
.status input::-webkit-slider-thumb { appearance: none; width: 14px; height: 14px; border-radius: 50%; background: #b4b4b4; }
.status output { margin-left: 7px; font-size: 11px; }

/* Annotations over the window */
.highlight { position: absolute; left: 474px; top: 187px; width: 173px; height: 660px; border: 6px solid #ff0a70; border-radius: 2px; pointer-events: none; }
.marker { position: absolute; left: 428px; top: 98px; pointer-events: none; }
```
